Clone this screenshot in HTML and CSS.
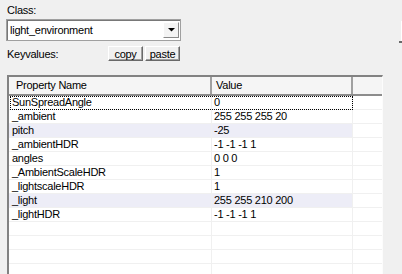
FILE: index.html
```html
<html>
	<head>
		<title>Keyvalues</title>
		<meta charset="utf-8"/>
		<link rel="stylesheet" href="styles.css">
	</head>
	<body>
		<div class="panel">
			<div class="top">
				<div class="form">
					<div class="label">Class:</div>
					<div class="combo">
						<span class="combo-text">light_environment</span>
						<span class="combo-btn">
							<svg width="7" height="4" viewBox="0 0 7 4"><polygon points="0,0 7,0 3.5,3.6" fill="#000"/></svg>
						</span>
					</div>
					<div class="keyrow">
						<span class="label">Keyvalues:</span>
						<div class="btns">
							<button class="btn">copy</button>
							<button class="btn">paste</button>
						</div>
					</div>
				</div>
				<div class="edge"></div>
			</div>
			<div class="list">
				<div class="head">
					<div class="hc c1">Property Name</div>
					<div class="hc c2">Value</div>
					<div class="hc c3"></div>
				</div>
				<div class="row focus"><div class="cell c1">SunSpreadAngle</div><div class="cell c2">0</div><div class="cell c3"></div></div>
				<div class="row"><div class="cell c1">_ambient</div><div class="cell c2">255 255 255 20</div><div class="cell c3"></div></div>
				<div class="row alt"><div class="cell c1">pitch</div><div class="cell c2">-25</div><div class="cell c3"></div></div>
				<div class="row"><div class="cell c1">_ambientHDR</div><div class="cell c2">-1 -1 -1 1</div><div class="cell c3"></div></div>
				<div class="row"><div class="cell c1">angles</div><div class="cell c2">0 0 0</div><div class="cell c3"></div></div>
				<div class="row"><div class="cell c1">_AmbientScaleHDR</div><div class="cell c2">1</div><div class="cell c3"></div></div>
				<div class="row"><div class="cell c1">_lightscaleHDR</div><div class="cell c2">1</div><div class="cell c3"></div></div>
				<div class="row alt"><div class="cell c1">_light</div><div class="cell c2">255 255 210 200</div><div class="cell c3"></div></div>
				<div class="row"><div class="cell c1">_lightHDR</div><div class="cell c2">-1 -1 -1 1</div><div class="cell c3"></div></div>
				<div class="row"><div class="cell c1"></div><div class="cell c2"></div><div class="cell c3"></div></div>
				<div class="row"><div class="cell c1"></div><div class="cell c2"></div><div class="cell c3"></div></div>
				<div class="row"><div class="cell c1"></div><div class="cell c2"></div><div class="cell c3"></div></div>
				<div class="row"><div class="cell c1"></div><div class="cell c2"></div><div class="cell c3"></div></div>
			</div>
		</div>
	</body>
</html>
```
FILE: styles.css
```css
body {
	margin: 0;
	background-color: #f0f0f0;
	font-family: "Liberation Sans", Arial, sans-serif;
	font-size: 11px;
	letter-spacing: -0.25px;
	color: #000;
	overflow: hidden;
}

.panel {
	padding: 4px 0 0 6px;
}

.top {
	display: flex;
}

.form {
	width: 175px;
}

.label {
	line-height: 13px;
	padding-left: 1px;
}

.combo {
	margin-top: 2px;
	height: 22px;
	box-sizing: border-box;
	border: 1px solid #a0a0a0;
	box-shadow: inset 1px 1px 0 #787878;
	background-color: #fff;
	display: flex;
	align-items: center;
	justify-content: space-between;
	padding: 0 1px 0 3px;
}

.combo-text {
	line-height: 13px;
}

.combo-btn {
	width: 16px;
	height: 16px;
	box-sizing: border-box;
	background-color: #f4f4f4;
	border: 1px solid;
	border-color: #fff #8a8a8a #8a8a8a #fff;
	display: flex;
	align-items: center;
	justify-content: center;
}

.combo-btn svg {
	display: block;
}

.keyrow {
	display: flex;
	justify-content: space-between;
	align-items: flex-end;
	margin-top: 5px;
}

.btns {
	display: flex;
	gap: 2px;
	margin-right: 1px;
}

.btn {
	width: 35px;
	height: 15px;
	padding: 0;
	box-sizing: border-box;
	background-color: #f0f0f0;
	border: 1px solid;
	border-color: #fff #696969 #696969 #fff;
	box-shadow: inset -1px -1px 0 #a0a0a0;
	font-family: "Liberation Sans", Arial, sans-serif;
	font-size: 11px;
	letter-spacing: -0.25px;
	line-height: 12px;
	color: #000;
}

.edge {
	margin-left: auto;
	width: 3px;
	height: 22px;
	margin-top: 17px;
	box-sizing: border-box;
	border-bottom: 2px solid #696969;
	box-shadow: inset -1px 0 0 #fff;
}

.list {
	margin-top: 14px;
	margin-left: 1px;
	width: 376px;
	box-sizing: border-box;
	border-left: 2px solid #828282;
	border-top: 2px solid #828282;
	border-right: 1px solid #fcfcfc;
	background-color: #fff;
}

.head {
	display: flex;
	background-color: #f5f5f5;
	border-bottom: 2px solid #8c8c8c;
}

.hc {
	height: 17px;
	line-height: 17px;
	box-sizing: border-box;
	border-right: 2px solid #a0a0a0;
}

.hc.c1 {
	padding-left: 7px;
}

.hc.c2 {
	padding-left: 4px;
}

.hc.c3 {
	border-right: none;
}

.c1 {
	width: 203px;
}

.c2 {
	width: 141px;
}

.c3 {
	width: 29px;
}

.row {
	display: flex;
	position: relative;
}

.cell {
	height: 14px;
	line-height: 13px;
	box-sizing: border-box;
	border-bottom: 1px solid #f0f0f0;
	border-right: 1px solid #f0f0f0;
	white-space: nowrap;
}

.cell.c1 {
	padding-left: 3px;
}

.cell.c2 {
	padding-left: 2px;
}

.cell.c3 {
	border-right: none;
}

.alt .c1,
.alt .c2 {
	background-color: #ededf7;
}

.focus::after {
	content: "";
	position: absolute;
	left: 1px;
	top: 0;
	width: 343px;
	height: 14px;
	box-sizing: border-box;
	border: 1px dotted #000;
}
```
